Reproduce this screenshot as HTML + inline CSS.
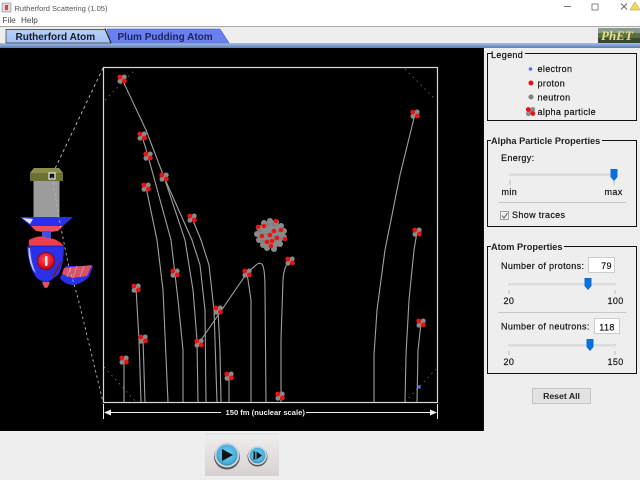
<!DOCTYPE html>
<html><head><meta charset="utf-8"><style>
html,body{margin:0;padding:0;background:#fff}
body{width:640px;height:480px;overflow:hidden;position:relative;font-family:"Liberation Sans",sans-serif}
svg{position:absolute;left:0;top:0}
text{font-family:"Liberation Sans",sans-serif;font-size:9px;fill:#111}
.l{letter-spacing:.35px;stroke:#111;stroke-width:.18px}
.b{font-weight:bold}
.tr{fill:none;stroke:#a0a0a0;stroke-width:1.100}
</style></head><body>
<svg width="640" height="480" viewBox="0 0 640 480">
<defs>
<g id="a">
<circle r="2.800" fill="#8a8a8a"/>
<circle cx="2.200" cy="-2" r="2.500" fill="#8a8a8a"/>
<circle cx="-2" cy="2.200" r="2.500" fill="#8a8a8a"/>
<circle cx="-2.200" cy="-2" r="2.400" fill="#f01010"/>
<circle cx="2.400" cy="2" r="2.400" fill="#f01010"/>
</g>
<g id="n"><circle r="3" fill="#8a8a8a"/></g>
<g id="p"><circle r="2.300" fill="#e81414"/></g>
<linearGradient id="strip" x1="0" y1="0" x2="0" y2="1"><stop offset="0" stop-color="#a8c0e8"/><stop offset="1" stop-color="#5a7cb8"/></linearGradient>
<linearGradient id="tab1" x1="0" y1="0" x2="0" y2="1"><stop offset="0" stop-color="#b8d0fa"/><stop offset="1" stop-color="#a4c2f6"/></linearGradient>
<linearGradient id="ctl" x1="0" y1="0" x2="0" y2="1"><stop offset="0" stop-color="#f0eeee"/><stop offset="1" stop-color="#d8d0d0"/></linearGradient>
<radialGradient id="btn" cx=".5" cy=".45" r=".55"><stop offset="0" stop-color="#6cd2f2"/><stop offset=".8" stop-color="#4ab0dc"/><stop offset="1" stop-color="#2c80a8"/></radialGradient>
<radialGradient id="rb" cx=".45" cy=".4" r=".6"><stop offset="0" stop-color="#ff5060"/><stop offset="1" stop-color="#d80010"/></radialGradient>
</defs>

<!-- Title bar -->
<rect width="640" height="27" fill="#fff"/>
<rect x="2" y="3" width="9" height="9" fill="#d8d8e0" stroke="#8a8a9a" stroke-width=".6"/>
<rect x="5" y="5" width="3" height="5" fill="#c05040"/>
<text x="14.500" y="11" style="font-size:7.500px;fill:#555">Rutherford Scattering (1.05)</text>
<text x="2.500" y="23" style="font-size:8.200px;fill:#444">File</text>
<text x="21" y="23" style="font-size:8.200px;fill:#444">Help</text>
<rect x="564" y="6" width="7" height="1" fill="#777"/>
<rect x="592" y="4" width="6" height="6" fill="none" stroke="#777" stroke-width=".9"/>
<path d="M621 3.500l6 6M627 3.500l-6 6" stroke="#666" stroke-width=".9"/>
<path d="M635 2l5 8h-10z" fill="#f0d860" stroke="#a89030" stroke-width=".5"/>
<rect y="26" width="640" height="1" fill="#a8a8a8"/>

<!-- Tab bar -->
<rect y="27" width="640" height="16" fill="#eeeeee"/>
<rect y="43" width="640" height="5" fill="url(#strip)"/>
<path d="M107 29H220L229 43H111Z" fill="#6a80f0" stroke="#4a5cb0" stroke-width=".6"/>
<path d="M6 43V29.500H105L111 43Z" fill="url(#tab1)" stroke="#333" stroke-width=".7"/>
<path d="M105 28.500L111 43" stroke="#222" stroke-width="1"/>
<text class="b" x="15.500" y="40" style="font-size:10px;font-weight:bold;fill:#1a1a2a">Rutherford Atom</text>
<text class="b" x="117.500" y="40" style="font-size:10px;font-weight:bold;fill:#1c2460">Plum Pudding Atom</text>
<!-- PhET logo -->
<rect x="598" y="28" width="42" height="15" fill="#5a7044"/>
<rect x="598" y="28" width="42" height="5" fill="#8a9a90"/>
<rect x="598" y="38" width="42" height="5" fill="#3a4a2c"/>
<text x="601" y="40" style="font-family:'Liberation Serif',serif;font-style:italic;font-weight:bold;font-size:13px;fill:#e6e080">PhET</text>

<!-- Main canvas -->
<rect y="48" width="484" height="383" fill="#000"/>
<rect x="484" y="48" width="156" height="383" fill="#eeeeee"/>
<rect x="483" y="48" width="1" height="383" fill="#111"/>
<rect y="431" width="640" height="49" fill="#eeeeee"/>

<!-- Dashed projection -->
<path d="M103 68L52 175" fill="none" stroke="#bdbdbd" stroke-width=".9" stroke-dasharray="3 3"/>
<g fill="none" stroke="#666" stroke-width=".9" stroke-dasharray="1.500 4">
<path d="M105 100L136 69"/><path d="M405 69L436 100"/><path d="M104 367L136 402"/><path d="M405 402L436 369"/>
</g>

<!-- Gun -->
<g>
<rect x="33.500" y="180" width="26" height="38" fill="#9c9c9c"/>
<path d="M30 173L34 168H59L63 173V181H30Z" fill="#6c7030"/>
<path d="M34 168H59L63 173H30Z" fill="#8a8e4a"/>
<rect x="49" y="173" width="6" height="6" fill="#111" stroke="#eee" stroke-width="1.200"/>
<path d="M20 217H73L62 227H32Z" fill="#2a30e8"/>
<path d="M31 226H63L58 231Q47 233 36 231Z" fill="#e85060"/>
<path d="M22 218L33 219L30 224Z" fill="#dfe4ff"/>
<rect x="42" y="231" width="9" height="9" fill="#3a50e8"/>
<path d="M29 240Q40 234 47 238Q57 238 64 246H29Z" fill="#e84050"/>
<path d="M27 246H64Q64 264 59 274Q52 280 48 282H44Q38 280 35 276Q28 264 27 246Z" fill="#2a30e8" stroke="#0a0a70" stroke-width=".5"/>
<path d="M30 248Q31 264 36 273L33 270Q28 260 28.500 248Z" fill="#b8c4ff"/>
<path d="M42 282H50L48 287Q46 289 44 287Z" fill="#e05060"/>
<circle cx="46" cy="261" r="9" fill="#8a0810"/>
<circle cx="46" cy="261" r="8" fill="url(#rb)"/>
<rect x="45" y="256" width="2.500" height="10" rx="1" fill="#ffe0e0"/>
<path d="M60 278L66 266H93L89 277Q80 285 72 285Q64 284 60 278Z" fill="#2a30e8"/>
<path d="M64 268L92 265L87 276L72 278L62 274Z" fill="#e05060"/>
<path d="M71 267L67 277M77 266L73 278M84 266L80 277" stroke="#b0a0a0" stroke-width="1"/>
<path d="M61 262L53 277" stroke="#7a1a10" stroke-width="1.600"/>
</g>
<path d="M52 177L60 223L68 263L78 298L103 402" fill="none" stroke="#b8b8b8" stroke-width=".9" stroke-dasharray="2.500 3"/>

<!-- Box -->
<rect x="103.500" y="67.500" width="334" height="335" fill="none" stroke="#d8d8d8" stroke-width="1.200"/>

<!-- Traces -->
<g class="tr">
<path d="M122 79L146 130L164 177L192 240L200 265L205 310L206 402"/>
<path d="M142 136L148 156L171 240L178 300L183 350L183 402"/>
<path d="M146 187L157 240L163 290L168 402"/>
<path d="M164 177L185 240L193 290L197 340L198 402"/>
<path d="M192 218L201 240L209 265L214 310L217 402"/>
<path d="M199 343L247 273L256 265Q261 261 263 266Q265 272 265 290L266 402"/>
<path d="M247 273L251 300L251 402"/>
<path d="M290 261Q284 265 283 280L281 340L281 402"/>
<path d="M218 310L220 350L221 402"/>
<path d="M136 288L139 340L141 402"/>
<path d="M143 339L145 402"/>
<path d="M124 360L124 402"/>
<path d="M229 376L229 402"/>
<path d="M415 114L400 175L385 250L377 310L374 355L374 402"/>
<path d="M417 232L414 250L409 300L406 355L405 402"/>
<path d="M421 323L418 350L417 402"/>
</g>

<!-- Alpha particles -->
<use href="#a" x="122" y="79"/><use href="#a" x="142" y="136"/><use href="#a" x="148" y="156"/>
<use href="#a" x="164" y="177"/><use href="#a" x="146" y="187"/><use href="#a" x="192" y="218"/>
<use href="#a" x="175" y="273"/><use href="#a" x="247" y="273"/><use href="#a" x="290" y="261"/>
<use href="#a" x="136" y="288"/><use href="#a" x="218" y="310"/><use href="#a" x="143" y="339"/>
<use href="#a" x="199" y="343"/><use href="#a" x="124" y="360"/><use href="#a" x="229" y="376"/>
<use href="#a" x="280" y="396"/><use href="#a" x="415" y="114"/><use href="#a" x="417" y="232"/>
<use href="#a" x="421" y="323"/>
<circle cx="419" cy="387" r="1.700" fill="#6a6af0"/>

<!-- Nucleus -->
<g>
<circle cx="270.500" cy="234.500" r="13.500" fill="#7a7a7a"/>
<use href="#n" x="264" y="223"/><use href="#n" x="270" y="221"/><use href="#n" x="276" y="222"/><use href="#n" x="281" y="226"/>
<use href="#n" x="259" y="228"/><use href="#n" x="265" y="228"/><use href="#n" x="271" y="227"/><use href="#n" x="277" y="228"/><use href="#n" x="284" y="231"/>
<use href="#n" x="257" y="234"/><use href="#n" x="263" y="233"/><use href="#n" x="269" y="232"/><use href="#n" x="275" y="233"/><use href="#n" x="281" y="234"/>
<use href="#n" x="259" y="240"/><use href="#n" x="265" y="238"/><use href="#n" x="271" y="238"/><use href="#n" x="278" y="240"/><use href="#n" x="284" y="237"/>
<use href="#n" x="263" y="245"/><use href="#n" x="269" y="244"/><use href="#n" x="275" y="245"/><use href="#n" x="280" y="244"/>
<use href="#n" x="267" y="248"/><use href="#n" x="274" y="249"/>
<use href="#p" x="258" y="227"/><use href="#p" x="276" y="221"/><use href="#p" x="285" y="239"/>
<use href="#p" x="264" y="226"/><use href="#p" x="274" y="231"/><use href="#p" x="262" y="236"/><use href="#p" x="270" y="235"/><use href="#p" x="281" y="230"/><use href="#p" x="267" y="242"/><use href="#p" x="277" y="238"/><use href="#p" x="271" y="246"/><use href="#p" x="272" y="241"/>
</g>

<!-- Scale arrow -->
<g stroke="#eee" fill="#eee">
<path d="M103.500 404V419M437.500 404V419" stroke-width="1"/>
<path d="M110 412.500H221M306 412.500H432" stroke-width="1"/>
<path d="M104 412.500L111 409.500V415.500Z" stroke="none"/>
<path d="M437 412.500L430 409.500V415.500Z" stroke="none"/>
</g>
<text class="b" x="225.500" y="415" style="font-size:7.600px;font-weight:bold;fill:#eee">150 fm (nuclear scale)</text>

<!-- Legend -->
<path d="M492 53.500H487.500V120.500H636.500V53.500H525" fill="none" stroke="#111" stroke-width="1"/>
<text class="l" x="491" y="58">Legend</text>
<circle cx="530.500" cy="69" r="1.800" fill="#6a6ae0"/><text class="l" x="537.500" y="72">electron</text>
<circle cx="531" cy="83" r="2.500" fill="#e81414"/><text class="l" x="537.500" y="86.500">proton</text>
<circle cx="531" cy="97" r="2.500" fill="#808080"/><text class="l" x="537.500" y="100.500">neutron</text>
<use href="#a" x="530.500" y="111.500"/><text class="l" x="537.500" y="115">alpha particle</text>

<!-- Alpha Particle Properties -->
<path d="M491 140.500H487.500V226.500H636.500V140.500H602" fill="none" stroke="#111" stroke-width="1"/>
<text class="b" x="491" y="144" style="font-size:9.200px;font-weight:bold;fill:#222">Alpha Particle Properties</text>
<text class="l" x="501" y="161">Energy:</text>
<rect x="509" y="173.500" width="108" height="2.500" fill="#dcdcdc"/>
<path d="M510 180V185M614 180V185" stroke="#bbb" stroke-width="1"/>
<path d="M610.500 169H617.500V177L614 181L610.500 177Z" fill="#0a6fd8"/>
<text class="l" x="501.500" y="195">min</text><text class="l" x="604.500" y="195">max</text>
<rect x="498" y="202" width="128" height="1" fill="#c8c8c8"/>
<rect x="500.500" y="211.500" width="8" height="8" fill="#f4f4f4" stroke="#8a8a8a" stroke-width=".8"/>
<path d="M502 215.500L504 218L507.500 213" fill="none" stroke="#555" stroke-width="1"/>
<text class="l" x="512" y="218">Show traces</text>

<!-- Atom Properties -->
<path d="M491 246.500H487.500V373.500H636.500V246.500H564" fill="none" stroke="#111" stroke-width="1"/>
<text class="b" x="491" y="250" style="font-size:9.200px;font-weight:bold;fill:#222">Atom Properties</text>
<text class="l" x="501" y="269">Number of protons:</text>
<rect x="588.500" y="257.500" width="26" height="15" fill="#fff" stroke="#ccc" stroke-width="1"/>
<text class="l" x="606.500" y="269" text-anchor="middle">79</text>
<rect x="508" y="283" width="108" height="2.500" fill="#dcdcdc"/>
<path d="M509 290V294M615 290V294" stroke="#bbb" stroke-width="1"/>
<path d="M584.500 278H591.500V286L588 290L584.500 286Z" fill="#0a6fd8"/>
<text class="l" x="503.500" y="304">20</text><text class="l" x="607.500" y="304">100</text>
<rect x="498" y="312" width="128" height="1" fill="#c8c8c8"/>
<text class="l" x="501" y="329.500">Number of neutrons:</text>
<rect x="594.500" y="318.500" width="25" height="15" fill="#fff" stroke="#ccc" stroke-width="1"/>
<text class="l" x="607" y="330.500" text-anchor="middle">118</text>
<rect x="508" y="344" width="108" height="2.500" fill="#dcdcdc"/>
<path d="M509 351V355M615 351V355" stroke="#bbb" stroke-width="1"/>
<path d="M586.500 339H593.500V347L590 351L586.500 347Z" fill="#0a6fd8"/>
<text class="l" x="503.500" y="365">20</text><text class="l" x="607.500" y="365">150</text>

<!-- Reset -->
<rect x="532.500" y="388.500" width="58" height="15" fill="#e2e2e2" stroke="#c4c4c4" stroke-width="1"/>
<text class="b" x="561.500" y="399" text-anchor="middle" style="font-size:8.700px;font-weight:bold;fill:#222">Reset All</text>

<!-- Bottom controls -->
<rect x="205" y="434" width="74" height="42" fill="url(#ctl)"/>
<rect x="205" y="433.500" width="74" height="1" fill="#dcdcdc"/>
<circle cx="227" cy="456.500" r="13" fill="#555"/>
<circle cx="227" cy="455" r="12.500" fill="#c8d4dc"/>
<circle cx="227" cy="455" r="10.500" fill="url(#btn)"/>
<path d="M222 449L233 455L222 461Z" fill="#111"/>
<circle cx="257.500" cy="456.500" r="10" fill="#555"/>
<circle cx="257.500" cy="455.500" r="9.500" fill="#c8d4dc"/>
<circle cx="257.500" cy="455.500" r="7.800" fill="url(#btn)"/>
<rect x="253.500" y="451.500" width="1.800" height="8" fill="#111"/>
<path d="M256.500 451.500L262 455.500L256.500 459.500Z" fill="#111"/>
</svg>
</body></html>
